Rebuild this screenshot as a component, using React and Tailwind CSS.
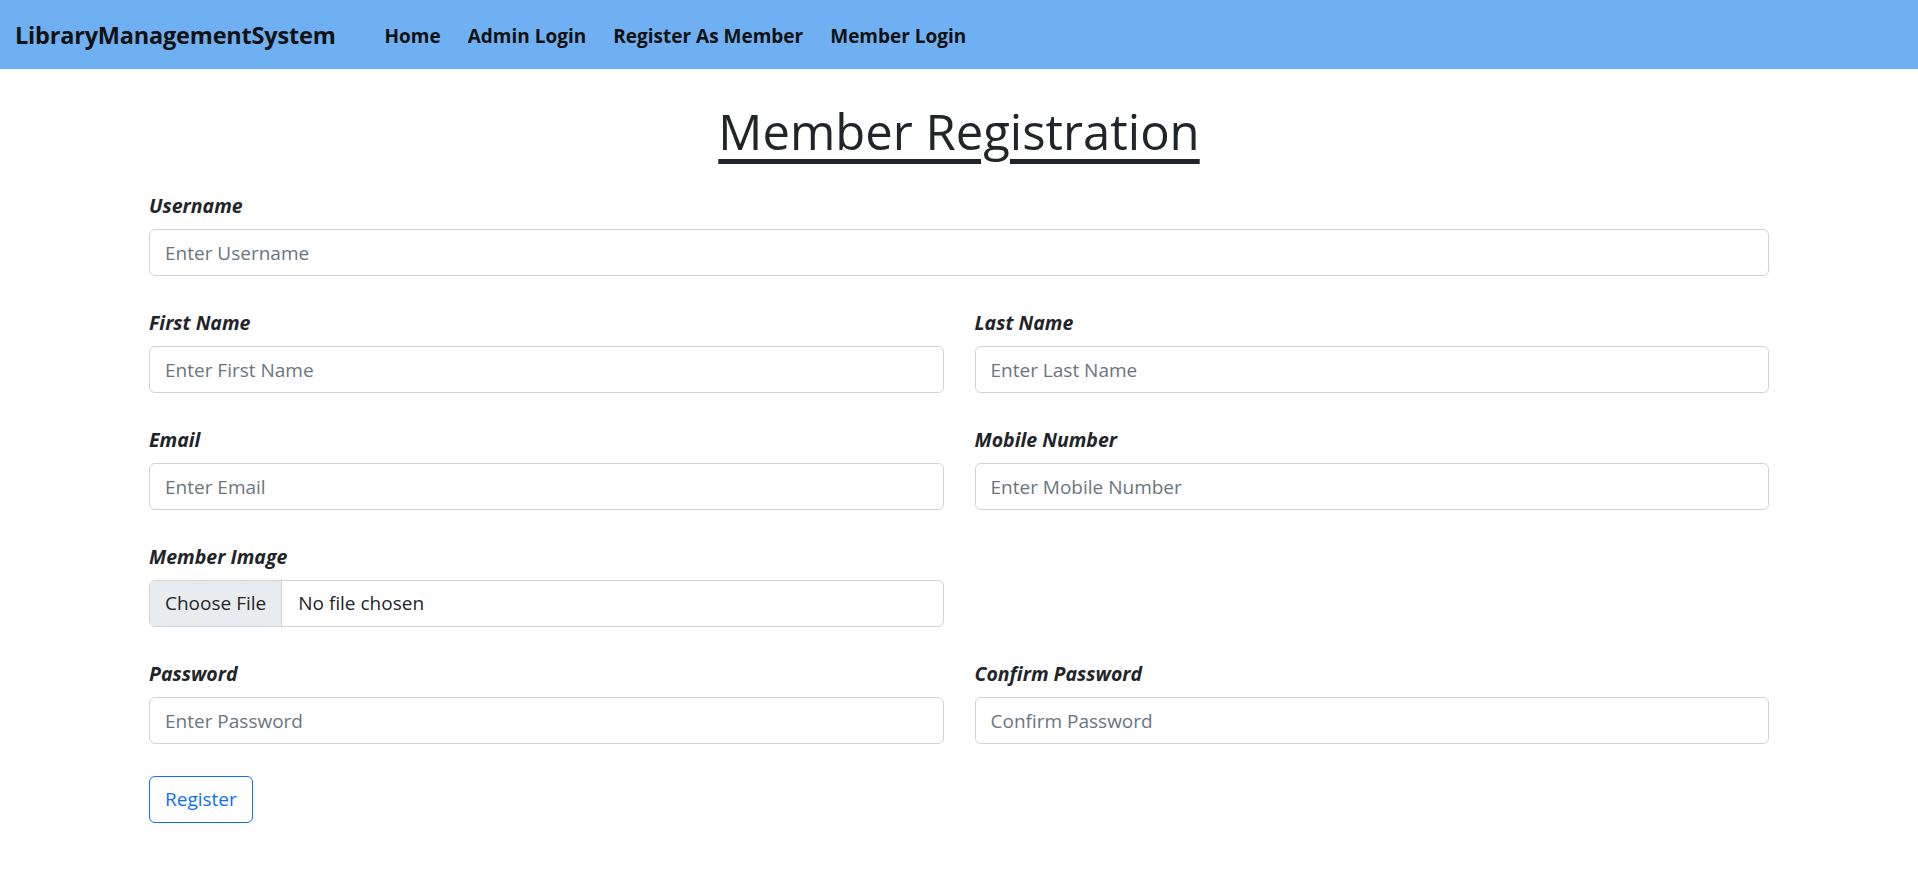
import React from "react";

function Label({ children }) {
  return (
    <label className="block h-[29px] leading-[29px] text-[19.5px] font-bold italic text-[#212529] mb-[9px]">
      {children}
    </label>
  );
}

function TextField({ label, placeholder, type = "text" }) {
  return (
    <div>
      <Label>{label}</Label>
      <input
        type={type}
        placeholder={placeholder}
        className="block w-full h-[47px] px-[15px] text-[19px] text-[#212529] bg-white border border-[#ced4da] rounded-[6px] outline-none placeholder:text-[#6c757d]"
      />
    </div>
  );
}

export default function App() {
  return (
    <div className="min-h-screen bg-white font-['Open_Sans',sans-serif] text-[#212529]">
      <nav className="h-[69px] bg-[#6eb0f2] flex items-center pl-[15px] pt-[3px]">
        <a href="#" className="text-[23.5px] font-bold text-[#111] tracking-[-0.2px]">
          LibraryManagementSystem
        </a>
        <ul className="flex items-center ml-[49px] gap-[27px] text-[19px] font-bold text-[#111]">
          <li><a href="#">Home</a></li>
          <li><a href="#">Admin Login</a></li>
          <li><a href="#">Register As Member</a></li>
          <li><a href="#">Member Login</a></li>
        </ul>
      </nav>

      <main className="w-[1620px] mx-auto">
        <h1 className="mt-[32px] text-center text-[49px] leading-[60px] font-normal underline decoration-[5px] underline-offset-[9px]">
          Member Registration
        </h1>

        <form className="mt-[30px] flex flex-col gap-[32px]" onSubmit={(e) => e.preventDefault()}>
          <TextField label="Username" placeholder="Enter Username" />

          <div className="grid grid-cols-2 gap-x-[31px]">
            <TextField label="First Name" placeholder="Enter First Name" />
            <TextField label="Last Name" placeholder="Enter Last Name" />
          </div>

          <div className="grid grid-cols-2 gap-x-[31px]">
            <TextField label="Email" placeholder="Enter Email" type="email" />
            <TextField label="Mobile Number" placeholder="Enter Mobile Number" />
          </div>

          <div className="grid grid-cols-2 gap-x-[31px]">
            <div>
              <Label>Member Image</Label>
              <div className="flex h-[47px] border border-[#ced4da] rounded-[6px] overflow-hidden text-[19px] text-[#212529]">
                <span className="flex items-center px-[15px] bg-[#e9ecef] border-r border-[#ced4da]">
                  Choose File
                </span>
                <span className="flex items-center pl-[16px]">No file chosen</span>
              </div>
            </div>
            <div />
          </div>

          <div className="grid grid-cols-2 gap-x-[31px]">
            <TextField label="Password" placeholder="Enter Password" type="password" />
            <TextField label="Confirm Password" placeholder="Confirm Password" type="password" />
          </div>

          <div>
            <button
              type="submit"
              className="h-[47px] px-[15px] border border-[#0d6efd] rounded-[6px] text-[19px] text-[#0d6efd] bg-white"
            >
              Register
            </button>
          </div>
        </form>
      </main>
    </div>
  );
}
